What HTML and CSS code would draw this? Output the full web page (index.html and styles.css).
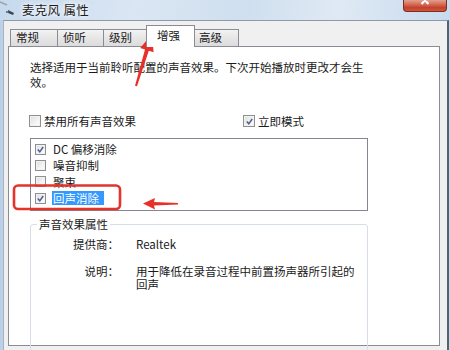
FILE: index.html
```html
<!DOCTYPE html>
<html lang="zh-CN">
<head>
<meta charset="utf-8">
<title>麦克风 属性</title>
<link rel="stylesheet" href="styles.css">
</head>
<body>
<div class="window">
  <div class="titlebar">
    <svg class="app-icon" width="16" height="16" viewBox="0 0 16 16">
      <path d="M0 1 L7 4" stroke="#9aa3ad" stroke-width="1.5" fill="none"/>
      <path d="M8 9 L14 12 L13 14 L8 12 Z" fill="#3c4650"/>
      <path d="M6 11 L9 11" stroke="#55606b" stroke-width="1.5"/>
    </svg>
    <span class="title">麦克风 属性</span>
    <span class="close">
      <svg width="43" height="11" viewBox="0 0 43 11">
        <path d="M18 -4 L25 4 M25 -4 L18 4" stroke="#fff" stroke-width="2.2" fill="none"/>
      </svg>
    </span>
  </div>
  <div class="client">
    <div class="tabs">
      <div class="tab w1">常规</div>
      <div class="tab w2">侦听</div>
      <div class="tab w3">级别</div>
      <div class="tab w4 active">增强</div>
      <div class="tab w5">高级</div>
    </div>
    <div class="panel">
      <p class="desc">选择适用于当前聆听配置的声音效果。下次开始播放时更改才会生效。</p>
      <div class="opts">
        <label class="opt opt-first"><span class="cb"></span>禁用所有声音效果</label>
        <label class="opt"><span class="cb"><svg class="tick" viewBox="0 0 10 10"><path d="M2 5 L4.2 7.6 L8 2.2" stroke="#4d5f93" stroke-width="1.7" fill="none"/></svg></span>立即模式</label>
      </div>
      <ul class="list">
        <li class="item"><span class="cb sm"><svg class="tick" viewBox="0 0 10 10"><path d="M2 5 L4.2 7.6 L8 2.2" stroke="#4d5f93" stroke-width="1.7" fill="none"/></svg></span><span class="lbl">DC 偏移消除</span></li>
        <li class="item"><span class="cb sm"></span><span class="lbl">噪音抑制</span></li>
        <li class="item"><span class="cb sm"></span><span class="lbl">聚束</span></li>
        <li class="item"><span class="cb sm"><svg class="tick" viewBox="0 0 10 10"><path d="M2 5 L4.2 7.6 L8 2.2" stroke="#4d5f93" stroke-width="1.7" fill="none"/></svg></span><span class="lbl selected">回声消除</span></li>
      </ul>
      <fieldset class="group">
        <legend class="legend">声音效果属性</legend>
        <div class="props">
          <span class="key">提供商：</span><span class="val">Realtek</span>
          <span class="key">说明：</span><span class="val val-desc">用于降低在录音过程中前置扬声器所引起的回声</span>
        </div>
      </fieldset>
    </div>
  </div>
  <svg class="annot" width="450" height="350" viewBox="0 0 450 350">
    <rect x="14" y="185.5" width="106" height="23.5" rx="4" ry="4" fill="none" stroke="#e3332b" stroke-width="2.6"/>
    <polygon points="143,203.5 155,198 154,202 178,203 178,204.5 154,205.5 155,209.5" fill="#e8302a"/>
    <polygon points="152,34 153.6,52.3 148.8,50.8 137,86.3 135,85.7 145,49.6 140.2,48.1" fill="#e8302a"/>
  </svg>
</div>
</body>
</html>
```

FILE: styles.css
```css
* { box-sizing: border-box; }

html, body {
  margin: 0;
  padding: 0;
}

body {
  width: 450px;
  height: 350px;
  overflow: hidden;
  font-family: "Noto Sans CJK SC", "Microsoft YaHei", sans-serif;
  font-size: 11.5px;
  color: #1a1a1a;
  background: #bcd2e9;
}

.window {
  position: relative;
  width: 450px;
  height: 350px;
  background: linear-gradient(to right, #b9d0e9 0, #bcd2ea 3px, #c9dbee 40%, #d4e2f0 70%, #c4d8ed 100%);
}

.titlebar {
  height: 20px;
  display: flex;
  align-items: flex-start;
  background: linear-gradient(100deg, #c6d9ee 0%, #dae6f3 30%, #cfdfef 55%, #dfe9f4 75%, #c8dbee 100%);
}

.app-icon {
  flex: none;
  margin-top: 1px;
}

.title {
  margin-left: 6px;
  margin-top: 2px;
  font-size: 12.5px;
  line-height: 16px;
  color: #1c1c1c;
  letter-spacing: 0.3px;
  text-shadow: 0 0 4px #ffffff, 0 0 6px #ffffff;
}

.close {
  margin-left: auto;
  margin-right: 3px;
  width: 44px;
  height: 12px;
  border: 1px solid #7b2d22;
  border-top: none;
  border-radius: 0 0 4px 4px;
  background: linear-gradient(#e2a08f 0%, #d56b55 40%, #c4402a 70%, #d1573c 100%);
  display: flex;
}

.close svg { display: block; }

.client {
  margin: 0 1px 0 3px;
  height: 330px;
  border-top: 1px solid #8e9aa8;
  border-left: 1px solid #a7b2be;
  border-right: 2px solid #55616e;
  background: #f0f0f0;
  padding: 4px 7px 0 4px;
}

.tabs {
  display: flex;
  align-items: flex-end;
  height: 21px;
  padding-left: 2px;
}

.tab {
  height: 17px;
  border: 1px solid #898c95;
  border-bottom: none;
  background: linear-gradient(#f3f3f3, #e6e6e6 50%, #dcdcdc);
  padding-left: 5px;
  line-height: 15px;
  font-size: 11.5px;
  margin-right: -1px;
  position: relative;
}

.w1 { width: 48px; }
.w2 { width: 47px; }
.w3 { width: 45px; }
.w4 { width: 49px; }
.w5 { width: 46px; }

.tab.active {
  height: 22px;
  margin-bottom: -1px;
  margin-left: -1px;
  margin-right: -2px;
  background: #ffffff;
  padding-left: 10px;
  line-height: 19px;
  z-index: 1;
}

.panel {
  height: 300px;
  background: #ffffff;
  border: 1px solid #898c95;
  padding: 13px 0 0 21px;
}

.desc {
  margin: 0;
  width: 338px;
  line-height: 15px;
}

.opts {
  display: flex;
  align-items: center;
  height: 14px;
  margin-top: 24px;
}

.opt {
  display: flex;
  align-items: center;
  line-height: 14px;
}

.opt-first {
  width: 214px;
  margin-left: -1px;
}

.cb {
  flex: none;
  width: 12px;
  height: 12px;
  border: 1px solid #8f8f8f;
  background: linear-gradient(135deg, #dcdcdc, #f4f4f4 60%, #ffffff);
  box-shadow: inset 0 0 0 1px #f2f2f2;
  margin-right: 3px;
  display: flex;
  align-items: center;
  justify-content: center;
}

.cb.sm {
  width: 11px;
  height: 11px;
  margin-right: 6px;
}

.tick {
  width: 9px;
  height: 9px;
  display: block;
}

.list {
  list-style: none;
  margin: 10px 0 0 0;
  padding: 2px 0 0 4px;
  width: 338px;
  height: 73px;
  border: 1px solid #828790;
  background: #ffffff;
}

.item {
  display: flex;
  align-items: center;
  height: 16.3px;
}

.lbl {
  line-height: 14px;
  padding-left: 1px;
}

.lbl.selected {
  background: #3399ff;
  color: #ffffff;
  padding: 0 5px 0 1px;
}

.group {
  margin: 6px 0 0 0;
  width: 338px;
  height: 140px;
  border: 1px solid #d5dfe5;
  border-radius: 3px;
  padding: 7px 0 0 6px;
}

.legend {
  padding: 0 2px;
  line-height: 14px;
  color: #1a1a1a;
}

.props {
  display: grid;
  grid-template-columns: 82px 228px;
  column-gap: 17px;
  row-gap: 14px;
  line-height: 13px;
}

.key {
  text-align: right;
}

.val-desc {
  line-height: 12.5px;
}

.annot {
  position: absolute;
  left: 0;
  top: 0;
  pointer-events: none;
}
```
